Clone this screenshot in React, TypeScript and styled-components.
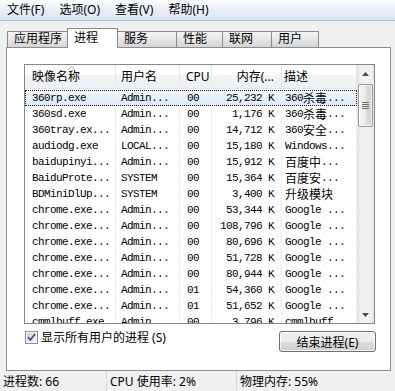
import React from 'react';
import styled, { createGlobalStyle } from 'styled-components';

const UI = `"Noto Sans", "Noto Sans CJK SC", sans-serif`;
const MONO = `"Liberation Mono", "Noto Sans CJK SC", monospace`;

const GlobalStyle = createGlobalStyle`
  html, body {
    margin: 0;
    padding: 0;
    background: #f0f0f0;
  }
  body {
    width: 395px;
    height: 391px;
    overflow: hidden;
  }
`;

const menus = ['文件(F)', '选项(O)', '查看(V)', '帮助(H)'];

const tabs = [
  { label: '应用程序', width: 61 },
  { label: '进程', width: 51, active: true },
  { label: '服务', width: 60 },
  { label: '性能', width: 47 },
  { label: '联网', width: 50 },
  { label: '用户', width: 48 },
];

interface Column {
  title: string;
  width: number;
  right?: boolean;
  headPad: number;
  cellPad: number;
}

const columns: Column[] = [
  { title: '映像名称', width: 91, headPad: 7, cellPad: 7 },
  { title: '用户名', width: 64, headPad: 5, cellPad: 5 },
  { title: 'CPU', width: 32, headPad: 6, cellPad: 7 },
  { title: '内存(...', width: 70, right: true, headPad: 7, cellPad: 7 },
  { title: '描述', width: 75, headPad: 2, cellPad: 3 },
];

const processes: string[][] = [
  ['360rp.exe', 'Admin...', '00', '25,232 K', '360杀毒...'],
  ['360sd.exe', 'Admin...', '00', '1,176 K', '360杀毒...'],
  ['360tray.ex...', 'Admin...', '00', '14,712 K', '360安全...'],
  ['audiodg.exe', 'LOCAL...', '00', '15,180 K', 'Windows...'],
  ['baidupinyi...', 'Admin...', '00', '15,912 K', '百度中...'],
  ['BaiduProte...', 'SYSTEM', '00', '15,364 K', '百度安...'],
  ['BDMiniDlUp...', 'SYSTEM', '00', '3,400 K', '升级模块'],
  ['chrome.exe...', 'Admin...', '00', '53,344 K', 'Google ...'],
  ['chrome.exe...', 'Admin...', '00', '108,796 K', 'Google ...'],
  ['chrome.exe...', 'Admin...', '00', '80,696 K', 'Google ...'],
  ['chrome.exe...', 'Admin...', '00', '51,728 K', 'Google ...'],
  ['chrome.exe...', 'Admin...', '00', '80,944 K', 'Google ...'],
  ['chrome.exe...', 'Admin...', '01', '54,360 K', 'Google ...'],
  ['chrome.exe...', 'Admin...', '01', '51,652 K', 'Google ...'],
  ['cmmlbuff.exe', 'Admin...', '00', '3,796 K', 'cmmlbuff...'],
];

const gridTemplate = columns.map((c) => `${c.width}px`).join(' ');

// SimSun-like: 6px latin, 12px han
function mixed(text: string) {
  return text
    .split(/([\u4e00-\u9fff]+)/)
    .filter((part) => part !== '')
    .map((part, i) =>
      /[\u4e00-\u9fff]/.test(part) ? <Han key={i}>{part}</Han> : <Latin key={i}>{part}</Latin>
    );
}

export default function App() {
  return (
    <>
      <GlobalStyle />
      <Window>
        <MenuBar>
          {menus.map((m) => (
            <MenuItem key={m}>{m}</MenuItem>
          ))}
        </MenuBar>

        <Body>
          <TabRow>
            {tabs.map((t, i) => (
              <Tab key={t.label} $w={t.width} $active={t.active} $first={i === 0}>
                {t.label}
              </Tab>
            ))}
          </TabRow>

          <Panel>
            <ListBox>
              <Table>
                <HeaderRow>
                  {columns.map((c, i) => (
                    <HeadCell key={c.title} $right={c.right} $pad={c.headPad}>
                      {i === 0 && (
                        <SortArrow width="7" height="4" viewBox="0 0 7 4">
                          <path d="M0 4 L3.5 0.5 L7 4" fill="none" stroke="#8fa9cc" strokeWidth="1" />
                        </SortArrow>
                      )}
                      {c.title}
                    </HeadCell>
                  ))}
                </HeaderRow>
                <Rows>
                  {processes.map((p, r) => (
                    <Row key={r} $selected={r === 0}>
                      {p.map((v, i) => (
                        <Cell key={i} $right={columns[i].right} $pad={columns[i].cellPad}>
                          {mixed(v)}
                        </Cell>
                      ))}
                    </Row>
                  ))}
                </Rows>
              </Table>

              <ScrollBar>
                <ScrollButton>
                  <svg width="7" height="4" viewBox="0 0 7 4">
                    <path d="M0 4 L3.5 0 L7 4 Z" fill="#4a4a4a" />
                  </svg>
                </ScrollButton>
                <Track>
                  <Thumb>
                    <svg width="7" height="7" viewBox="0 0 7 7">
                      {[0, 2, 4, 6].map((y) => (
                        <rect key={y} x="0" y={y} width="7" height="1" fill="#6a6a6a" />
                      ))}
                    </svg>
                  </Thumb>
                </Track>
                <ScrollButton>
                  <svg width="7" height="4" viewBox="0 0 7 4">
                    <path d="M0 0 L7 0 L3.5 4 Z" fill="#4a4a4a" />
                  </svg>
                </ScrollButton>
              </ScrollBar>
            </ListBox>

            <BottomRow>
              <CheckLabel>
                <svg width="13" height="13" viewBox="0 0 13 13">
                  <defs>
                    <linearGradient id="cb" x1="0" y1="0" x2="1" y2="1">
                      <stop offset="0" stopColor="#cbcfd5" />
                      <stop offset="1" stopColor="#f6f6f6" />
                    </linearGradient>
                  </defs>
                  <rect x="0.5" y="0.5" width="12" height="12" fill="#f4f4f4" stroke="#8e8f8f" />
                  <rect x="2" y="2" width="9" height="9" fill="url(#cb)" />
                  <path d="M3 6.2 L5.4 8.8 L10 3" fill="none" stroke="#3c56a0" strokeWidth="1.8" />
                </svg>
                显示所有用户的进程 (S)
              </CheckLabel>
              <Button>结束进程(E)</Button>
            </BottomRow>
          </Panel>
        </Body>

        <StatusBar>
          <StatusCell $w={107}>进程数: 66</StatusCell>
          <StatusCell $w={130}>CPU 使用率: 2%</StatusCell>
          <StatusCell>物理内存: 55%</StatusCell>
        </StatusBar>
      </Window>
    </>
  );
}

const Window = styled.div`
  width: 395px;
  height: 391px;
  display: flex;
  flex-direction: column;
  background: #f0f0f0;
  font-family: ${UI};
  font-size: 12px;
  color: #000;
`;

const MenuBar = styled.div`
  height: 20px;
  display: flex;
  align-items: center;
  border-bottom: 1px solid #b6bdcb;
  background: linear-gradient(to bottom, #fbfcfe 0%, #eaf0f8 45%, #dce5f2 100%);
`;

const MenuItem = styled.div`
  padding: 0 7px;
  margin-right: 1px;
  line-height: 16px;
`;

const Body = styled.div`
  flex: 1;
  padding: 7px 0 0 6px;
  display: flex;
  flex-direction: column;
`;

const TabRow = styled.div`
  position: relative;
  z-index: 1;
  height: 20px;
  margin-left: 1px;
  display: flex;
  align-items: flex-end;
`;

const Tab = styled.div<{ $w: number; $active?: boolean; $first?: boolean }>`
  box-sizing: border-box;
  width: ${(p) => p.$w}px;
  height: ${(p) => (p.$active ? 20 : 16)}px;
  margin-bottom: ${(p) => (p.$active ? 0 : 1)}px;
  margin-left: ${(p) => (p.$first ? 0 : -1)}px;
  padding-left: 6px;
  border: 1px solid #898c95;
  border-bottom: none;
  line-height: ${(p) => (p.$active ? 17 : 14)}px;
  background: ${(p) =>
    p.$active ? '#ffffff' : 'linear-gradient(to bottom, #f5f5f5 0%, #e6e6e6 50%, #d6d6d6 100%)'};
  position: relative;
  z-index: ${(p) => (p.$active ? 2 : 1)};
`;

const Panel = styled.div`
  box-sizing: border-box;
  width: 385px;
  height: 324px;
  margin-top: -1px;
  padding: 16px 14px 0 17px;
  border: 1px solid #898c95;
  background: #ffffff;
`;

const ListBox = styled.div`
  box-sizing: border-box;
  width: 351px;
  height: 260px;
  border: 1px solid #828790;
  display: flex;
  overflow: hidden;
  background: #fff;
`;

const Table = styled.div`
  width: 332px;
  display: flex;
  flex-direction: column;
`;

const HeaderRow = styled.div`
  display: grid;
  grid-template-columns: ${gridTemplate};
  height: 24px;
  box-sizing: border-box;
  border-bottom: 1px solid #e3e6ea;
  background: linear-gradient(to bottom, #ffffff 0%, #ffffff 42%, #f3f4f6 42%, #eff0f2 100%);
`;

const HeadCell = styled.div<{ $right?: boolean; $pad: number }>`
  position: relative;
  box-sizing: border-box;
  border-right: 1px solid #e2e5ea;
  line-height: 24px;
  white-space: nowrap;
  overflow: hidden;
  text-align: ${(p) => (p.$right ? 'right' : 'left')};
  padding: ${(p) => (p.$right ? `0 ${p.$pad}px 0 0` : `0 0 0 ${p.$pad}px`)};
`;

const SortArrow = styled.svg`
  position: absolute;
  left: 43px;
  top: 1px;
`;

const Rows = styled.div`
  flex: 1;
  overflow: hidden;
  padding-top: 1px;
`;

const Row = styled.div<{ $selected?: boolean }>`
  display: grid;
  grid-template-columns: ${gridTemplate};
  height: 16px;
  background: ${(p) => (p.$selected ? 'linear-gradient(to bottom, #f5f9fe, #dbe9fb)' : 'transparent')};
  outline: ${(p) => (p.$selected ? '1px dotted #1a1a1a' : 'none')};
  outline-offset: -1px;
`;

const Cell = styled.div<{ $right?: boolean; $pad: number }>`
  box-sizing: border-box;
  display: flex;
  align-items: center;
  justify-content: ${(p) => (p.$right ? 'flex-end' : 'flex-start')};
  border-right: 1px solid #edf1f6;
  overflow: hidden;
  padding: ${(p) => (p.$right ? `0 ${p.$pad}px 0 0` : `0 0 0 ${p.$pad}px`)};
`;

const Latin = styled.span`
  font-family: ${MONO};
  font-size: 11px;
  letter-spacing: -0.6px;
  line-height: 16px;
  white-space: pre;
  flex-shrink: 0;
`;

const Han = styled.span`
  font-family: "Noto Sans CJK SC", sans-serif;
  font-size: 12px;
  line-height: 16px;
  white-space: pre;
  flex-shrink: 0;
`;

const ScrollBar = styled.div`
  width: 17px;
  display: flex;
  flex-direction: column;
  background: linear-gradient(to right, #e4e4e4 0%, #f1f1f1 25%, #f1f1f1 75%, #e6e6e6 100%);
`;

const ScrollButton = styled.div`
  height: 17px;
  display: flex;
  align-items: center;
  justify-content: center;
`;

const Track = styled.div`
  flex: 1;
  padding-top: 2px;
`;

const Thumb = styled.div`
  box-sizing: border-box;
  width: 15px;
  height: 43px;
  margin-left: 1px;
  border: 1px solid #979797;
  border-radius: 2px;
  display: flex;
  align-items: center;
  justify-content: center;
  background: linear-gradient(to right, #f4f4f4 0%, #ebebeb 50%, #dcdcdc 51%, #d2d2d2 100%);
  box-shadow: inset 0 0 0 1px rgba(255, 255, 255, 0.7);
`;

const BottomRow = styled.div`
  margin-top: 7px;
  display: flex;
  justify-content: space-between;
  align-items: flex-start;
`;

const CheckLabel = styled.label`
  display: flex;
  align-items: center;
  gap: 3px;
  margin-left: 1px;
  height: 13px;
  line-height: 13px;
`;

const Button = styled.button`
  box-sizing: border-box;
  width: 97px;
  height: 21px;
  padding: 0;
  font-family: ${UI};
  font-size: 12px;
  color: #000;
  border: 1px solid #707070;
  border-radius: 3px;
  background: linear-gradient(to bottom, #f2f2f2 0%, #ebebeb 50%, #dddddd 51%, #cfcfcf 100%);
  box-shadow: inset 0 0 0 1px rgba(255, 255, 255, 0.75);
`;

const StatusBar = styled.div`
  height: 20px;
  display: flex;
  background: #f0f0f0;
`;

const StatusCell = styled.div<{ $w?: number }>`
  box-sizing: border-box;
  ${(p) => (p.$w ? `width: ${p.$w}px; border-right: 1px solid #d9d9d9;` : 'flex: 1;')}
  padding: 2px 0 0 3px;
  line-height: 18px;
  white-space: nowrap;
`;
